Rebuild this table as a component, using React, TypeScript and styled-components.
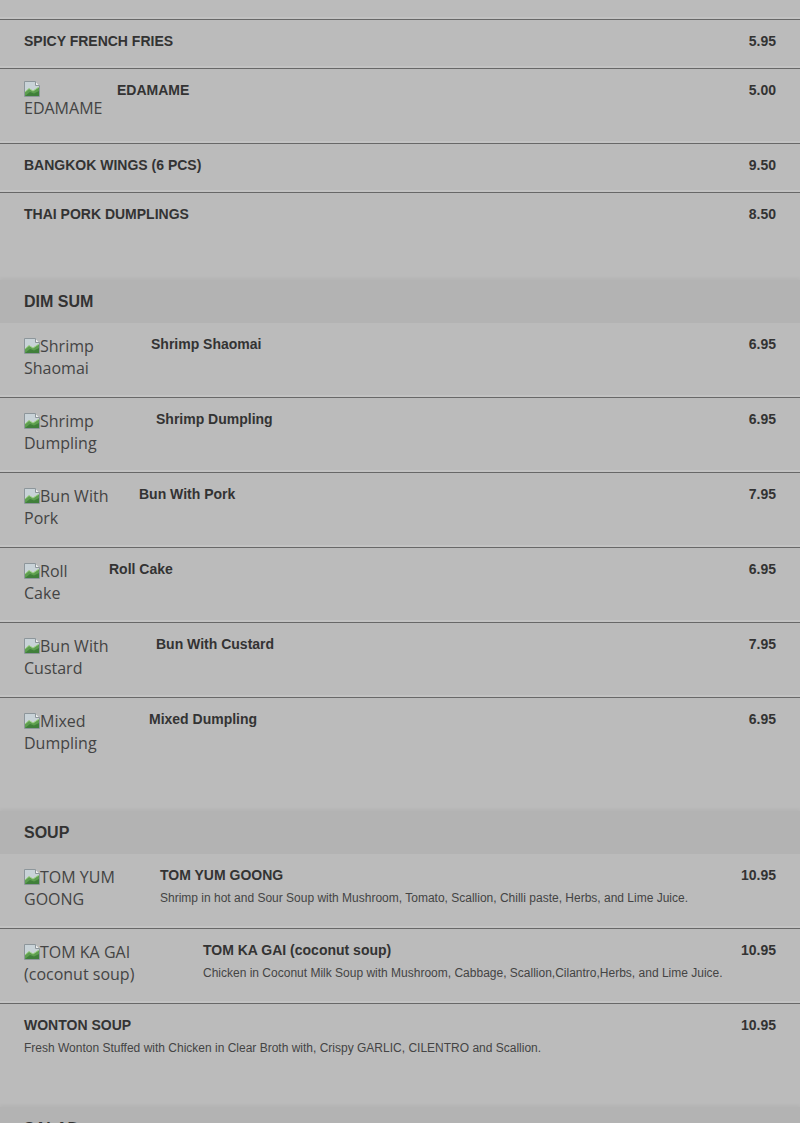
import React from 'react';
import styled, { createGlobalStyle } from 'styled-components';

const GlobalStyle = createGlobalStyle`
    html, body {
        margin: 0;
        padding: 0;
        background: #bbbbbb;
        font-family: 'Liberation Sans', Arial, sans-serif;
        overflow: hidden;
    }
`;

const Menu = styled.main`
    width: 800px;
    margin-top: -55px;
    background: #bbbbbb;
`;

const Section = styled.section`
    padding-bottom: 39px;
`;

const SectionTitle = styled.h2`
    margin: 0;
    height: 43px;
    padding: 0 24px;
    display: flex;
    align-items: center;
    background: #b3b3b3;
    box-shadow: 0 -2px 3px rgba(0, 0, 0, 0.04);
    font-size: 16px;
    font-weight: bold;
    color: #333333;
    text-transform: uppercase;
`;

const Row = styled.div<{ $last?: boolean }>`
    display: flex;
    align-items: flex-start;
    padding: 12px 24px;
    border-bottom: ${(p) => (p.$last ? 'none' : '1px solid #686868')};
    box-shadow: ${(p) => (p.$last ? 'none' : 'inset 0 -2px 0 #c3c3c3')};
`;

const Thumb = styled.div<{ $w: number }>`
    flex: 0 0 ${(p) => p.$w}px;
    min-height: 44px;
    padding-bottom: 6px;
    font-family: 'Open Sans', sans-serif;
    font-size: 16px;
    line-height: 22px;
    color: #444444;
`;

const AltLine = styled.div<{ $iconOnly?: boolean }>`
    white-space: nowrap;
    height: ${(p) => (p.$iconOnly ? '16px' : '22px')};
    line-height: ${(p) => (p.$iconOnly ? '16px' : '22px')};

    svg {
        vertical-align: ${(p) => (p.$iconOnly ? 'top' : '-2px')};
    }
`;

const Info = styled.div`
    flex: 1;
    min-height: 24px;
`;

const Name = styled.div`
    font-size: 14px;
    line-height: 18px;
    font-weight: bold;
    color: #333333;
`;

const Desc = styled.div`
    margin-top: 6px;
    font-size: 12px;
    line-height: 16px;
    color: #444444;
`;

const Price = styled.div`
    margin-left: 16px;
    font-size: 14px;
    line-height: 18px;
    font-weight: bold;
    color: #333333;
`;

const BrokenImage = () => (
    <svg width="16" height="16" viewBox="0 0 16 16">
        <path d="M0.5 0.5h11l4 4v11h-15z" fill="#c9d3d8" stroke="#8d969b" strokeWidth="1" />
        <path d="M11.5 0.5v4h4" fill="#eeeeee" stroke="#8d969b" strokeWidth="1" />
        <path d="M1 15 L1 11 L5 7.5 L9 10 L15 6 V15z" fill="#5d9e4f" />
        <path d="M1 15 L6 11 L10 12.5 L15 10 V15z" fill="#3f7f3a" />
        <path d="M1 11 L5 7.5 L9 10 L15 6" fill="none" stroke="#9fcf86" strokeWidth="1" />
    </svg>
);

interface Item {
    name: string;
    price: string;
    desc?: string;
    alt?: string[];
    thumbW?: number;
}

interface MenuSection {
    title?: string;
    items: Item[];
}

const sections: MenuSection[] = [
    {
        items: [
            { name: 'SPRING ROLLS', price: '6.95', alt: ['SPRING', 'ROLLS'], thumbW: 96 },
            { name: 'SPICY FRENCH FRIES', price: '5.95' },
            { name: 'EDAMAME', price: '5.00', alt: ['', 'EDAMAME'], thumbW: 93 },
            { name: 'BANGKOK WINGS (6 PCS)', price: '9.50' },
            { name: 'THAI PORK DUMPLINGS', price: '8.50' }
        ]
    },
    {
        title: 'Dim Sum',
        items: [
            { name: 'Shrimp Shaomai', price: '6.95', alt: ['Shrimp', 'Shaomai'], thumbW: 127 },
            { name: 'Shrimp Dumpling', price: '6.95', alt: ['Shrimp', 'Dumpling'], thumbW: 132 },
            { name: 'Bun With Pork', price: '7.95', alt: ['Bun With', 'Pork'], thumbW: 115 },
            { name: 'Roll Cake', price: '6.95', alt: ['Roll', 'Cake'], thumbW: 85 },
            { name: 'Bun With Custard', price: '7.95', alt: ['Bun With', 'Custard'], thumbW: 132 },
            { name: 'Mixed Dumpling', price: '6.95', alt: ['Mixed', 'Dumpling'], thumbW: 125 }
        ]
    },
    {
        title: 'Soup',
        items: [
            {
                name: 'TOM YUM GOONG',
                price: '10.95',
                desc: 'Shrimp in hot and Sour Soup with Mushroom, Tomato, Scallion, Chilli paste, Herbs, and Lime Juice.',
                alt: ['TOM YUM', 'GOONG'],
                thumbW: 136
            },
            {
                name: 'TOM KA GAI (coconut soup)',
                price: '10.95',
                desc: 'Chicken in Coconut Milk Soup with Mushroom, Cabbage, Scallion,Cilantro,Herbs, and Lime Juice.',
                alt: ['TOM KA GAI', '(coconut soup)'],
                thumbW: 179
            },
            {
                name: 'WONTON SOUP',
                price: '10.95',
                desc: 'Fresh Wonton Stuffed with Chicken in Clear Broth with, Crispy GARLIC, CILENTRO and Scallion.'
            }
        ]
    },
    {
        title: 'Salad',
        items: [
            { name: 'PAPAYA SALAD', price: '9.95' },
            { name: 'LARB GAI', price: '10.95' }
        ]
    }
];

const MenuRow: React.FC<{ item: Item; last: boolean }> = ({ item, last }) => (
    <Row $last={last}>
        {item.alt ? (
            <Thumb $w={item.thumbW || 100} role="img" aria-label={item.alt.join(' ')}>
                {item.alt.map((line, i) => (
                    <AltLine key={i} $iconOnly={i === 0 && line === ''}>
                        {i === 0 ? <BrokenImage /> : null}
                        {line}
                    </AltLine>
                ))}
            </Thumb>
        ) : null}
        <Info>
            <Name>{item.name}</Name>
            {item.desc ? <Desc>{item.desc}</Desc> : null}
        </Info>
        <Price>{item.price}</Price>
    </Row>
);

const App: React.FC = () => (
    <>
        <GlobalStyle />
        <Menu>
            {sections.map((section, si) => (
                <Section key={si}>
                    {section.title ? <SectionTitle>{section.title}</SectionTitle> : null}
                    {section.items.map((item, i) => (
                        <MenuRow
                            key={item.name}
                            item={item}
                            last={i === section.items.length - 1}
                        />
                    ))}
                </Section>
            ))}
        </Menu>
    </>
);

export default App;
